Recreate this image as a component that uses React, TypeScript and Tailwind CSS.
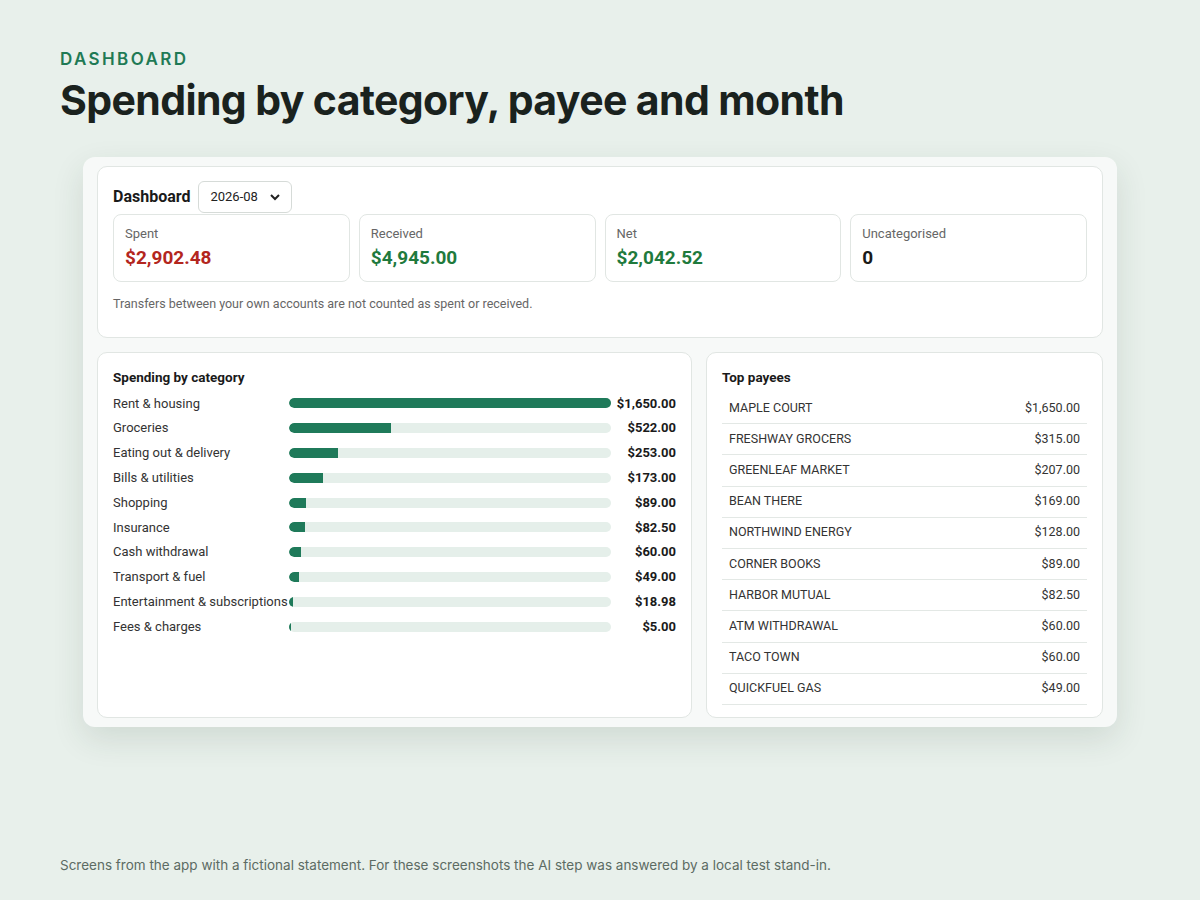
import React from "react";

const cats: [string, number][] = [
  ["Rent & housing", 1650],
  ["Groceries", 522],
  ["Eating out & delivery", 253],
  ["Bills & utilities", 173],
  ["Shopping", 89],
  ["Insurance", 82.5],
  ["Cash withdrawal", 60],
  ["Transport & fuel", 49],
  ["Entertainment & subscriptions", 18.98],
  ["Fees & charges", 5],
];
const payees: [string, string][] = [
  ["MAPLE COURT", "$1,650.00"],
  ["FRESHWAY GROCERS", "$315.00"],
  ["GREENLEAF MARKET", "$207.00"],
  ["BEAN THERE", "$169.00"],
  ["NORTHWIND ENERGY", "$128.00"],
  ["CORNER BOOKS", "$89.00"],
  ["HARBOR MUTUAL", "$82.50"],
  ["ATM WITHDRAWAL", "$60.00"],
  ["TACO TOWN", "$60.00"],
  ["QUICKFUEL GAS", "$49.00"],
];
const fmt = (n: number) => "$" + n.toLocaleString("en-US", { minimumFractionDigits: 2, maximumFractionDigits: 2 });

export default function App() {
  return (
    <div className="w-[1200px] h-[900px] bg-[#e8f0eb] flex flex-col px-[60px] pt-[48px]" style={{ fontFamily: "Inter, 'Noto Sans', sans-serif" }}>
      <div className="text-[17px] font-semibold tracking-[0.14em] text-[#1f7a55] leading-[22px]">DASHBOARD</div>
      <h1 className="text-[41px] font-bold text-[#1a221e] leading-[50px] mt-[5px] tracking-[-0.015em]">Spending by category, payee and month</h1>
      <div className="mt-[32px] ml-[23px] w-[1034px] h-[570px] bg-[#f7f9f8] rounded-[12px] shadow-[0_12px_32px_rgba(30,60,45,0.12)] px-[14px] pt-[9px] flex flex-col gap-[14px]" style={{ fontFamily: "Roboto, 'Noto Sans', sans-serif" }}>
        <div className="h-[172px] bg-white border border-[#e1e6e3] rounded-[10px] px-[15px] pt-[14px]">
          <div className="flex items-center gap-[8px]">
            <span className="text-[16px] font-bold text-[#1a1a1a]">Dashboard</span>
            <div className="w-[94px] h-[32px] border border-[#d6dbd8] rounded-[6px] flex items-center justify-between px-[11px] text-[13px] text-[#222]">
              2026-08
              <svg width="10" height="7" viewBox="0 0 10 7"><path d="M1 1l4 4 4-4" stroke="#222" strokeWidth="2" fill="none" /></svg>
            </div>
          </div>
          <div className="grid grid-cols-4 gap-[9px] mt-[1px]">
            {[
              ["Spent", "$2,902.48", "text-[#b3261e]"],
              ["Received", "$4,945.00", "text-[#1f7a3d]"],
              ["Net", "$2,042.52", "text-[#1f7a3d]"],
              ["Uncategorised", "0", "text-[#1a1a1a]"],
            ].map(([l, v, c]) => (
              <div key={l} className="h-[68px] border border-[#e1e6e3] rounded-[8px] px-[11px] pt-[11px]">
                <div className="text-[13px] text-[#666] leading-[16px]">{l}</div>
                <div className={`text-[19px] font-bold leading-[26px] mt-[3px] ${c}`}>{v}</div>
              </div>
            ))}
          </div>
          <div className="text-[12.5px] text-[#666] mt-[13px]">Transfers between your own accounts are not counted as spent or received.</div>
        </div>
        <div className="flex gap-[14px] h-[366px]">
          <div className="w-[595px] bg-white border border-[#e1e6e3] rounded-[10px] px-[15px] pt-[14px]">
            <div className="text-[13.5px] font-bold text-[#1a1a1a] leading-[20px]">Spending by category</div>
            <div className="flex flex-col mt-[4px]">
              {cats.map(([n, v]) => (
                <div key={n} className="flex items-center h-[24.8px]">
                  <span className="w-[176px] text-[13px] text-[#333] whitespace-nowrap">{n}</span>
                  <div className="w-[322px] h-[10px] bg-[#e5efea] rounded-full overflow-hidden">
                    <div className="h-full bg-[#1f7a5a] rounded-l-full" style={{ width: `${Math.max((v / 1650) * 100, 0.6)}%` }} />
                  </div>
                  <span className="flex-1 text-right text-[13px] font-bold text-[#1a1a1a]">{fmt(v)}</span>
                </div>
              ))}
            </div>
          </div>
          <div className="flex-1 bg-white border border-[#e1e6e3] rounded-[10px] px-[15px] pt-[14px]">
            <div className="text-[13.5px] font-bold text-[#1a1a1a] leading-[20px]">Top payees</div>
            <div className="mt-[6px]">
              {payees.map(([n, v]) => (
                <div key={n} className="flex justify-between items-center h-[31.2px] border-b border-[#e3e8e5] px-[7px] text-[12.5px] text-[#333]">
                  <span>{n}</span>
                  <span>{v}</span>
                </div>
              ))}
            </div>
          </div>
        </div>
      </div>
      <div className="mt-[128px] text-[13.5px] text-[#5c6b63]">Screens from the app with a fictional statement. For these screenshots the AI step was answered by a local test stand-in.</div>
    </div>
  );
}
